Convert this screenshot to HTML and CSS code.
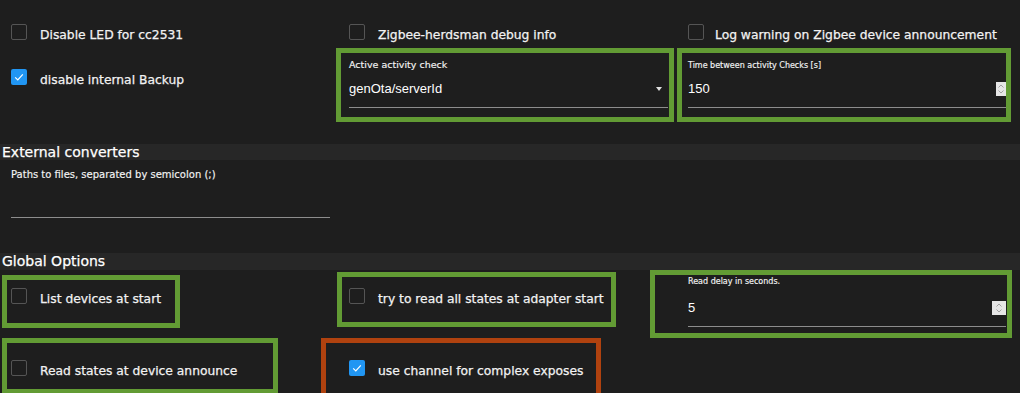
FILE: index.html
```html
<html lang="en">
<head>
  <meta charset="UTF-8" />
  <meta name="viewport" content="width=device-width, initial-scale=1.0"/>
  <title>Zigbee settings</title>
  <link rel="stylesheet" href="styles.css">
</head>
<body>

  <div class="top">
    <div class="check row1 c1"><span class="box"></span><span class="label">Disable LED for cc2531</span></div>
    <div class="check row1 c2"><span class="box"></span><span class="label">Zigbee-herdsman debug info</span></div>
    <div class="check row1 c3"><span class="box"></span><span class="label">Log warning on Zigbee device announcement</span></div>

    <div class="check c1 backup">
      <span class="box checked">
        <svg viewBox="0 0 16 16" width="16" height="16"><path d="M4.2 8.3l2.6 2.6 5-5.6" fill="none" stroke="#fff" stroke-width="1.2"/></svg>
      </span>
      <span class="label">disable internal Backup</span>
    </div>

    <div class="mark field activity">
      <div class="field-label">Active activity check</div>
      <div class="field-input">
        <span class="value">genOta/serverId</span>
        <span class="caret"></span>
      </div>
    </div>

    <div class="mark field interval">
      <div class="field-label small">Time between activity Checks [s]</div>
      <div class="field-input">
        <span class="value">150</span>
        <span class="spin">
          <svg viewBox="0 0 10 14" width="10" height="14"><path d="M2.5 5.5L5 3l2.5 2.5M2.5 8.5L5 11l2.5-2.5" fill="none" stroke="#9a9a9a" stroke-width="0.9"/></svg>
        </span>
      </div>
    </div>
  </div>

  <div class="section-title">External converters</div>
  <div class="paths">
    <div class="paths-label">Paths to files, separated by semicolon (;)</div>
    <div class="paths-input"></div>
  </div>

  <div class="section-title global">Global Options</div>
  <div class="global-grid">
    <div class="mark list-devices">
      <div class="check"><span class="box"></span><span class="label">List devices at start</span></div>
    </div>
    <div class="mark read-all">
      <div class="check"><span class="box"></span><span class="label">try to read all states at adapter start</span></div>
    </div>
    <div class="mark field read-delay">
      <div class="field-label small">Read delay in seconds.</div>
      <div class="field-input">
        <span class="value">5</span>
        <span class="spin wide">
          <svg viewBox="0 0 14 14" width="14" height="14"><path d="M4.5 5.5L7 3l2.5 2.5M4.5 8.5L7 11l2.5-2.5" fill="none" stroke="#9a9a9a" stroke-width="0.9"/></svg>
        </span>
      </div>
    </div>

    <div class="mark read-announce">
      <div class="check"><span class="box"></span><span class="label">Read states at device announce</span></div>
    </div>
    <div class="mark changed channel">
      <div class="check">
        <span class="box checked">
          <svg viewBox="0 0 16 16" width="16" height="16"><path d="M4.2 8.3l2.6 2.6 5-5.6" fill="none" stroke="#fff" stroke-width="1.2"/></svg>
        </span>
        <span class="label">use channel for complex exposes</span>
      </div>
    </div>
  </div>

</body>
</html>
```

FILE: styles.css
```css
* { box-sizing: border-box; }

body {
  margin: 0;
  padding: 0;
  background: #1e1e1e;
  color: #f2f2f2;
  font-family: 'DejaVu Sans', sans-serif;
  overflow: hidden;
}

/* checkboxes */
.check {
  display: flex;
  align-items: flex-start;
  gap: 13px;
}

.check .label {
  font-size: 12.3px;
  line-height: 14px;
  margin-top: 4px;
  white-space: nowrap;
  -webkit-text-stroke: 0.25px currentColor;
}

.box {
  width: 16px;
  height: 16px;
  flex: none;
  border: 1.5px solid #555;
  border-radius: 2px;
}

.box.checked {
  border: none;
  background: #2196f3;
}

.box svg { display: block; }

/* top settings */
.top {
  display: grid;
  grid-template-columns: 336px 340px 336px;
  grid-template-rows: 32px 74px;
  padding-top: 16px;
}

.row1 { padding-top: 8px; }
.c1 { padding-left: 11px; }
.c2 { padding-left: 13px; }
.c3 { padding-left: 12px; gap: 11px; }

.backup { padding-top: 21px; }

/* highlight outlines */
.mark {
  border: 5px solid #629b34;
}

.mark.changed {
  border-color: #b0420f;
}

.field-label {
  font-size: 9.5px;
  line-height: 12px;
  color: #f4f4f4;
  -webkit-text-stroke: 0.15px currentColor;
}

.field-label.small {
  font-size: 8px;
  line-height: 10px;
}

.field-input {
  display: flex;
  align-items: center;
  justify-content: space-between;
  height: 27px;
  padding-bottom: 11px;
  border-bottom: 1px solid #8d8d8d;
}

.value {
  font-family: 'Liberation Sans', Arial, sans-serif;
  font-size: 13px;
  line-height: 16px;
  color: #fff;
}

.caret {
  width: 0;
  height: 0;
  margin-right: 6px;
  border-left: 3.5px solid transparent;
  border-right: 3.5px solid transparent;
  border-top: 4px solid #e0e0e0;
}

.spin {
  width: 10px;
  height: 14px;
  background: #e6e6e6;
}

.spin.wide { width: 14px; }

.spin svg { display: block; }

.activity {
  height: 74px;
  width: 338px;
  padding: 6px 1px 0 8px;
}

.activity .field-input { margin-top: 10px; }

.interval {
  height: 74px;
  width: 334px;
  margin-left: 1px;
  padding: 8px 0 0 6px;
}

.interval .field-input { margin-top: 10px; }

/* sections */
.section-title {
  margin-top: 22px;
  height: 16px;
  padding-left: 2px;
  background: #272727;
  font-size: 14px;
  line-height: 16px;
  color: #fff;
  -webkit-text-stroke: 0.25px currentColor;
}

.section-title.global {
  margin-top: 35px;
  height: 17px;
}

.paths {
  padding: 9px 0 0 11px;
}

.paths-label {
  font-size: 10px;
  line-height: 12px;
  color: #f4f4f4;
  -webkit-text-stroke: 0.15px currentColor;
}

.paths-input {
  width: 319px;
  height: 37px;
  border-bottom: 1px solid #8d8d8d;
}

/* global options */
.global-grid {
  display: grid;
  grid-template-columns: 321px 329px 362px;
  align-items: start;
}

.list-devices {
  width: 178px;
  height: 53px;
  margin: 5px 0 0 2px;
  padding: 8px 0 0 4px;
}

.read-all {
  width: 279px;
  height: 55px;
  margin: 2px 0 0 16px;
  padding: 11px 0 0 7px;
}

.read-delay {
  width: 362px;
  height: 68px;
  padding: 2px 1px 0 33px;
}

.read-delay .field-input { margin-top: 13px; }

.read-announce {
  width: 276px;
  height: 56px;
  margin-left: 2px;
  padding: 17px 0 0 4px;
}

.channel {
  width: 280px;
  height: 60px;
  padding: 17px 0 0 23px;
}
```
